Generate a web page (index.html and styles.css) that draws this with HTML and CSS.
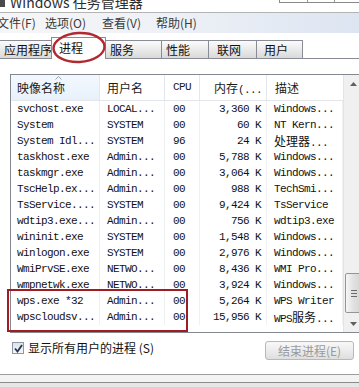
FILE: index.html
```html
<!DOCTYPE html>
<html lang="zh-CN">
<head>
<meta charset="utf-8">
<title>Windows 任务管理器</title>
<link rel="stylesheet" href="styles.css">
</head>
<body>
<div class="titlebar">
  <span class="app-icon"></span>
  <span class="title">Windows 任务管理器</span>
  <div class="controls"><span class="ctl"></span><span class="ctl"></span><span class="ctl last"></span></div>
</div>
<div class="menubar">
  <span class="menu-item m1">文件(F)</span>
  <span class="menu-item m2">选项(O)</span>
  <span class="menu-item m3">查看(V)</span>
  <span class="menu-item m4">帮助(H)</span>
</div>
<div class="tabs">
  <div class="tab t1">应用程序</div>
  <div class="tab t2 active">进程</div>
  <div class="tab t3">服务</div>
  <div class="tab t4">性能</div>
  <div class="tab t5">联网</div>
  <div class="tab t6">用户</div>
</div>
<div class="list">
  <div class="list-main">
    <div class="header">
      <div class="hcell c-name sorted">映像名称<svg class="sort-arrow" width="7" height="4" viewBox="0 0 7 4"><path d="M0.5 3.5 L3.5 0.5 L6.5 3.5" fill="none" stroke="#97a5b8" stroke-width="1"/></svg></div>
      <div class="hcell c-user">用户名</div>
      <div class="hcell c-cpu mono">CPU</div>
      <div class="hcell c-mem">内存<span class="mono">(...</span></div>
      <div class="hcell c-desc">描述</div>
    </div>
    <div class="rows mono">
      <div class="row"><span class="cell c-name">svchost.exe</span><span class="cell c-user">LOCAL...</span><span class="cell c-cpu">00</span><span class="cell c-mem">3,360 K</span><span class="cell c-desc">Windows...</span></div>
      <div class="row"><span class="cell c-name">System</span><span class="cell c-user">SYSTEM</span><span class="cell c-cpu">00</span><span class="cell c-mem">60 K</span><span class="cell c-desc">NT Kern...</span></div>
      <div class="row"><span class="cell c-name">System Idl...</span><span class="cell c-user">SYSTEM</span><span class="cell c-cpu">96</span><span class="cell c-mem">24 K</span><span class="cell c-desc"><span class="cjk">处理器</span>...</span></div>
      <div class="row"><span class="cell c-name">taskhost.exe</span><span class="cell c-user">Admin...</span><span class="cell c-cpu">00</span><span class="cell c-mem">5,788 K</span><span class="cell c-desc">Windows...</span></div>
      <div class="row"><span class="cell c-name">taskmgr.exe</span><span class="cell c-user">Admin...</span><span class="cell c-cpu">00</span><span class="cell c-mem">3,064 K</span><span class="cell c-desc">Windows...</span></div>
      <div class="row"><span class="cell c-name">TscHelp.ex...</span><span class="cell c-user">Admin...</span><span class="cell c-cpu">00</span><span class="cell c-mem">988 K</span><span class="cell c-desc">TechSmi...</span></div>
      <div class="row"><span class="cell c-name">TsService....</span><span class="cell c-user">SYSTEM</span><span class="cell c-cpu">00</span><span class="cell c-mem">9,424 K</span><span class="cell c-desc">TsService</span></div>
      <div class="row"><span class="cell c-name">wdtip3.exe...</span><span class="cell c-user">Admin...</span><span class="cell c-cpu">00</span><span class="cell c-mem">756 K</span><span class="cell c-desc">wdtip3.exe</span></div>
      <div class="row"><span class="cell c-name">wininit.exe</span><span class="cell c-user">SYSTEM</span><span class="cell c-cpu">00</span><span class="cell c-mem">1,548 K</span><span class="cell c-desc">Windows...</span></div>
      <div class="row"><span class="cell c-name">winlogon.exe</span><span class="cell c-user">SYSTEM</span><span class="cell c-cpu">00</span><span class="cell c-mem">2,976 K</span><span class="cell c-desc">Windows...</span></div>
      <div class="row"><span class="cell c-name">WmiPrvSE.exe</span><span class="cell c-user">NETWO...</span><span class="cell c-cpu">00</span><span class="cell c-mem">8,436 K</span><span class="cell c-desc">WMI Pro...</span></div>
      <div class="row"><span class="cell c-name">wmpnetwk.exe</span><span class="cell c-user">NETWO...</span><span class="cell c-cpu">00</span><span class="cell c-mem">3,924 K</span><span class="cell c-desc">Windows...</span></div>
      <div class="row"><span class="cell c-name">wps.exe *32</span><span class="cell c-user">Admin...</span><span class="cell c-cpu">00</span><span class="cell c-mem">5,264 K</span><span class="cell c-desc">WPS Writer</span></div>
      <div class="row"><span class="cell c-name">wpscloudsv...</span><span class="cell c-user">Admin...</span><span class="cell c-cpu">00</span><span class="cell c-mem">15,956 K</span><span class="cell c-desc">WPS<span class="cjk">服务</span>...</span></div>
    </div>
  </div>
  <div class="scrollbar">
    <div class="sb-btn"><svg width="7" height="4" viewBox="0 0 7 4"><path d="M0 4 L3.5 0 L7 4 Z" fill="#606060"/></svg></div>
    <div class="sb-track">
      <div class="sb-thumb"><span class="grip"></span><span class="grip"></span><span class="grip"></span></div>
    </div>
    <div class="sb-btn"><svg width="7" height="4" viewBox="0 0 7 4"><path d="M0 0 L3.5 4 L7 0 Z" fill="#606060"/></svg></div>
  </div>
</div>
<div class="footer">
  <div class="check">
    <span class="box"><svg width="9" height="9" viewBox="0 0 9 9"><path d="M1 4.5 L3.5 7.5 L8 1" fill="none" stroke="#2a3550" stroke-width="1.8"/></svg></span>
    <span class="check-label">显示所有用户的进程 (S)</span>
  </div>
  <div class="btn">结束进程(E)</div>
</div>
<div class="status"><div class="status-inner"></div></div>
<svg class="ellipse" width="58" height="36" viewBox="0 0 58 36"><ellipse cx="29" cy="17.5" rx="25.5" ry="14.5" transform="rotate(-3 29 17.5)" fill="none" stroke="#b02a31" stroke-width="2.4"/></svg>
<div class="redbox"></div>
</body>
</html>
```

FILE: styles.css
```css
* { box-sizing: border-box; margin: 0; padding: 0; }
html, body { width: 359px; height: 387px; overflow: hidden; background: #fff; }
body {
  position: relative;
  font-family: "Noto Sans CJK SC", sans-serif;
  font-size: 12px;
  color: #000;
}
.mono {
  font-family: "Liberation Mono", "Noto Sans CJK SC", monospace;
  font-size: 11px;
  letter-spacing: -0.6px;
}
.cjk {
  font-family: "Noto Sans CJK SC", sans-serif;
  font-size: 12px;
  letter-spacing: 0;
}

/* title bar */
.titlebar {
  height: 12px;
  display: flex;
  align-items: flex-start;
  overflow: hidden;
  background: #fff;
}
.app-icon {
  width: 5px;
  height: 7px;
  background: #4a4a4a;
}
.title {
  font-size: 14px;
  line-height: 14px;
  margin-top: -5px;
  margin-left: 5px;
  color: #2e2e2e;
  white-space: nowrap;
}
.controls {
  margin-left: auto;
  margin-right: -4px;
  width: 84px;
  height: 3px;
  display: flex;
  border: 1px solid #8a8a8a;
  border-top: none;
}
.ctl { flex: 1; border-right: 1px solid #9a9a9a; }
.ctl.last { border-right: none; }

/* menu bar */
.menubar {
  height: 21px;
  border-top: 1px solid #b4b4b4;
  background: linear-gradient(to right, #f6f6f7 0%, #eef1f6 45%, #dde5f2 100%);
  display: flex;
  align-items: center;
  color: #3a3a3a;
  white-space: nowrap;
}
.menu-item { line-height: 16px; }
.m1 { margin-left: -3px; width: 48px; }
.m2 { width: 57px; }
.m3 { width: 54px; }

/* tabs */
.tabs {
  height: 26px;
  display: flex;
  align-items: flex-end;
  border-bottom: 1px solid #898c95;
}
.tab {
  height: 18px;
  line-height: 17px;
  border: 1px solid #898c95;
  border-bottom: none;
  border-left: none;
  background: linear-gradient(#fbfbfb 0%, #ececec 45%, #d9d9d9 100%);
  color: #111;
  white-space: nowrap;
}
.tab.active {
  height: 22px;
  margin-bottom: -1px;
  line-height: 20px;
  background: #fff;
  border-left: 1px solid #898c95;
  margin-left: -1px;
  position: relative;
}
.t1 { width: 52px; padding-left: 4px; }
.t2 { width: 55px; padding-left: 7px; }
.t3 { width: 56px; padding-left: 4px; }
.t4 { width: 47px; padding-left: 4px; }
.t5 { width: 48px; padding-left: 8px; }
.t6 { width: 46px; padding-left: 7px; }

/* list */
.list {
  margin: 15px 0 0 10px;
  width: 352px;
  height: 259px;
  border: 1px solid #828790;
  display: flex;
}
.list-main { width: 332px; flex: none; }
.header {
  height: 26px;
  display: flex;
  border-bottom: 1px solid #e3e6ea;
}
.hcell {
  height: 25px;
  line-height: 25px;
  border-right: 1px solid #e3e6ea;
  color: #1b1b1b;
  white-space: nowrap;
  overflow: hidden;
}
.hcell.sorted {
  background: linear-gradient(#f3f8fd, #e8f1fb);
  position: relative;
}
.sort-arrow { position: absolute; left: 44px; top: 1px; }
.c-name { width: 89px; padding-left: 6px; }
.c-user { width: 65px; padding-left: 7px; }
.c-cpu { width: 35px; padding-left: 8px; }
.c-mem { width: 67px; text-align: right; padding-right: 4px; }
.c-desc { width: 76px; padding-left: 7px; border-right: none; }
.hcell.c-cpu { padding-left: 8px; }
.hcell.c-desc { padding-left: 8px; }

.rows { height: 231px; overflow: hidden; color: #111; }
.row { display: flex; height: 16px; line-height: 16px; }
.cell {
  display: block;
  border-right: 1px solid #f0f0f0;
  white-space: nowrap;
  overflow: hidden;
}
.cell.c-mem { padding-right: 5px; }

/* scrollbar */
.scrollbar {
  width: 18px;
  flex: none;
  display: flex;
  flex-direction: column;
  background: #f0f0f0;
  border-left: 1px solid #e4e4e4;
}
.sb-btn {
  height: 17px;
  display: flex;
  align-items: center;
  justify-content: center;
  padding-left: 1px;
}
.sb-track { flex: 1; padding-top: 181px; padding-left: 1px; }
.sb-thumb {
  height: 40px;
  border: 1px solid #959595;
  border-radius: 2px;
  background: linear-gradient(to right, #f6f6f6, #e2e2e2 50%, #d6d6d6);
  display: flex;
  flex-direction: column;
  align-items: center;
  justify-content: center;
  gap: 2px;
  padding-left: 2px;
}
.grip { width: 6px; height: 1px; background: #6a6a6a; }

/* footer */
.footer {
  display: flex;
  align-items: flex-start;
  margin-top: 8px;
  padding-left: 12px;
  height: 19px;
}
.check {
  display: flex;
  align-items: center;
  gap: 4px;
  margin-top: 1px;
  height: 12px;
}
.box {
  width: 12px;
  height: 12px;
  border: 1px solid #8e97a6;
  background: linear-gradient(#dfe3ea, #f4f6f9);
  display: flex;
  align-items: center;
  justify-content: center;
}
.check-label { line-height: 14px; color: #111; white-space: nowrap; }
.btn {
  margin-left: auto;
  margin-right: 5px;
  width: 89px;
  height: 19px;
  border: 1px solid #b8b8b8;
  border-radius: 3px;
  background: linear-gradient(#f8f8f8, #ececec 50%, #dedede);
  color: #9a9a9a;
  text-align: center;
  line-height: 17px;
  white-space: nowrap;
}

/* status */
.status {
  margin-top: 14px;
  height: 14px;
  border-top: 1px solid #9c9c9c;
  background: #e6e6e6;
}
.status-inner {
  height: 8px;
  background: #f3f3f3;
  border-bottom: 1px solid #8a8a8a;
}

/* annotations */
.ellipse { position: absolute; left: 50px; top: 30px; }
.redbox {
  position: absolute;
  left: 7px;
  top: 289px;
  width: 181px;
  height: 43px;
  border: 2px solid #9e1c22;
}
```
